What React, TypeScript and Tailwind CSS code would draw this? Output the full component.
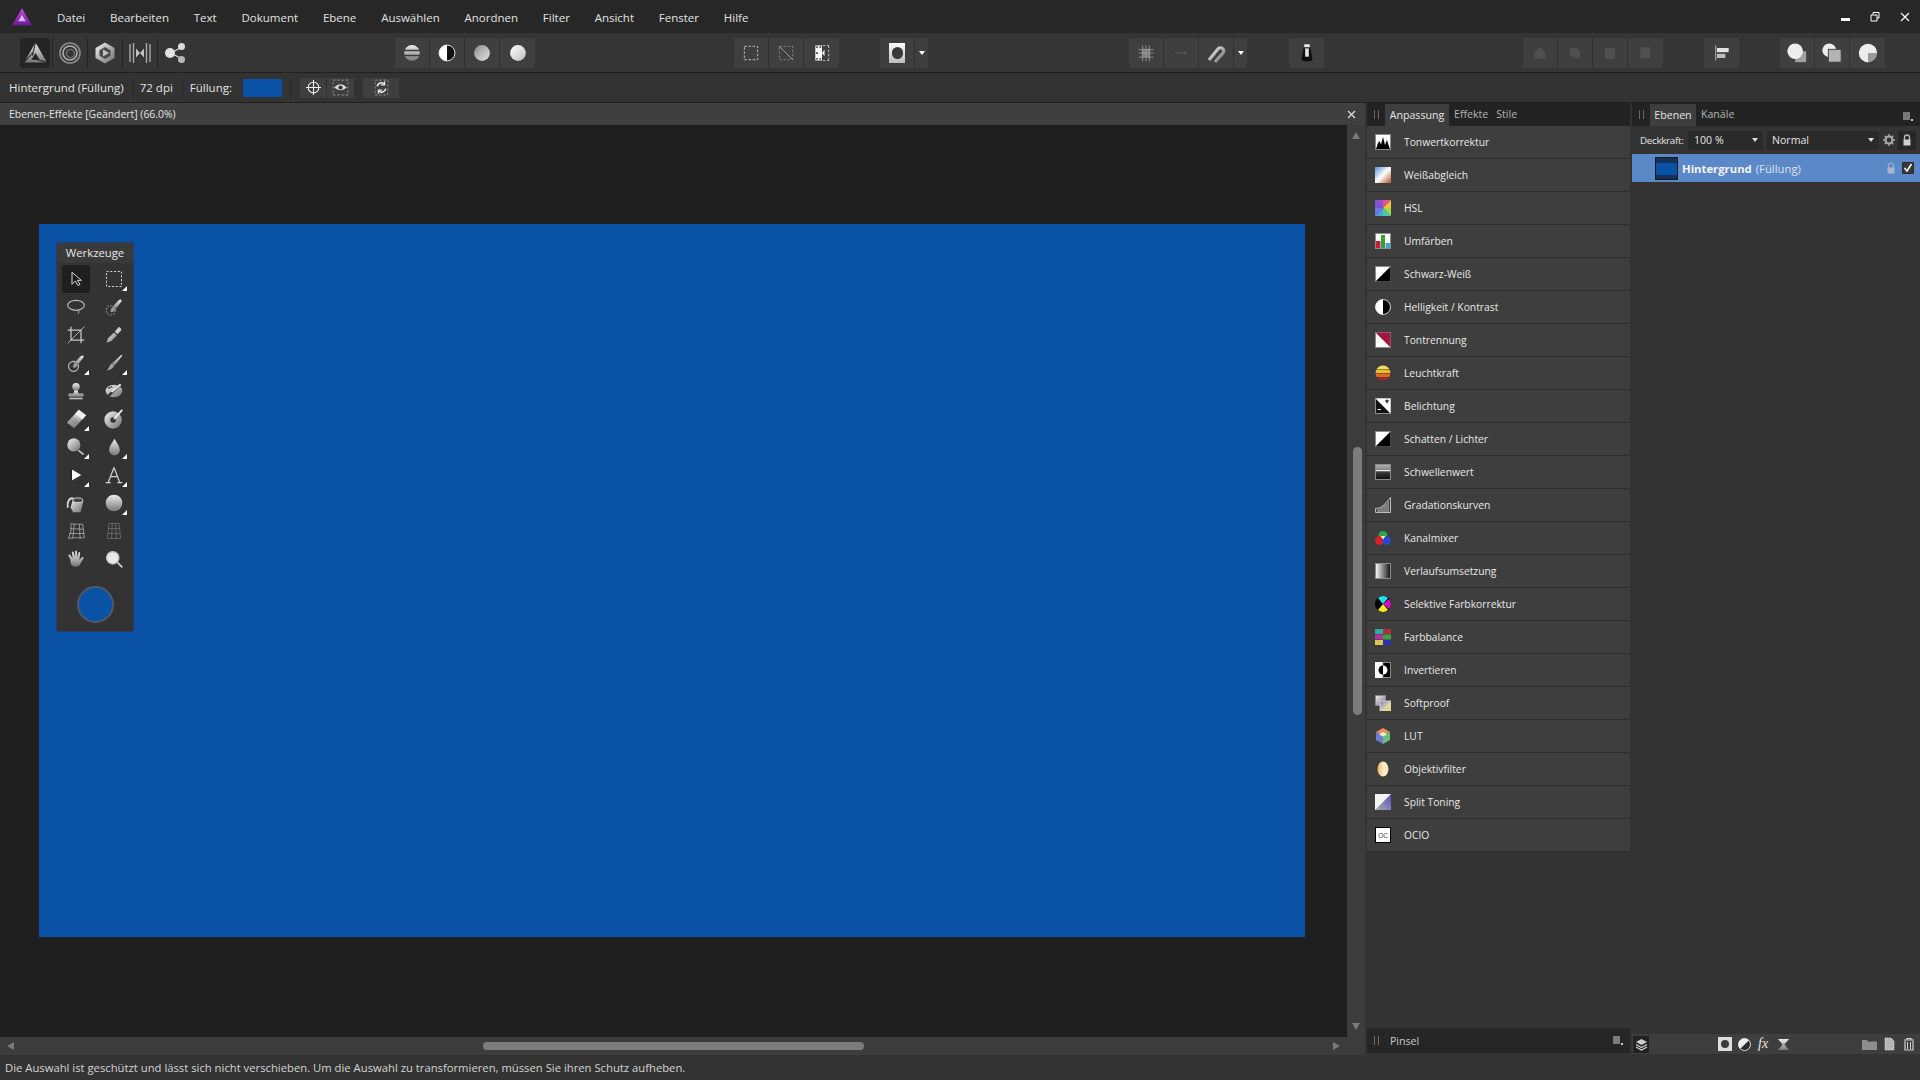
import type { ReactNode } from "react"

const Svg = ({ size = 20, box = 24, children }: { size?: number; box?: number; children: ReactNode }) => (
  <svg width={size} height={size} viewBox={`0 0 ${box} ${box}`} className="block shrink-0">
    {children}
  </svg>
)

function Defs() {
  return (
    <svg className="absolute h-0 w-0">
      <defs>
        <linearGradient id="gv" x1="0" y1="0" x2="0" y2="1">
          <stop offset="0" stopColor="#eeeeee" />
          <stop offset="1" stopColor="#777777" />
        </linearGradient>
        <linearGradient id="gd" x1="0" y1="0" x2="1" y2="1">
          <stop offset="0" stopColor="#f2f2f2" />
          <stop offset="1" stopColor="#6e6e6e" />
        </linearGradient>
        <linearGradient id="gm" x1="0" y1="0" x2="1" y2="1">
          <stop offset="0" stopColor="#8a8a8a" />
          <stop offset="1" stopColor="#e6e6e6" />
        </linearGradient>
        <linearGradient id="gw" x1="0" y1="0" x2="1" y2="1">
          <stop offset="0" stopColor="#ffffff" />
          <stop offset="1" stopColor="#bdbdbd" />
        </linearGradient>
        <linearGradient id="gh" x1="0" y1="0" x2="1" y2="0">
          <stop offset="0" stopColor="#ffffff" />
          <stop offset="1" stopColor="#111111" />
        </linearGradient>
        <linearGradient id="wb" x1="0" y1="0" x2="1" y2="1">
          <stop offset="0" stopColor="#4d93dc" />
          <stop offset="0.5" stopColor="#ffffff" />
          <stop offset="1" stopColor="#b4562a" />
        </linearGradient>
        <linearGradient id="lens" x1="0" y1="0" x2="1" y2="0">
          <stop offset="0" stopColor="#f0b860" />
          <stop offset="0.6" stopColor="#fdf0d0" />
          <stop offset="1" stopColor="#f6dfae" />
        </linearGradient>
        <linearGradient id="split" x1="0" y1="1" x2="1" y2="0">
          <stop offset="0" stopColor="#a9b3a6" />
          <stop offset="1" stopColor="#5a4fc0" />
        </linearGradient>
        <linearGradient id="logo" x1="0" y1="0" x2="0" y2="1">
          <stop offset="0" stopColor="#c24be0" />
          <stop offset="1" stopColor="#6a1a9a" />
        </linearGradient>
        <linearGradient id="thresh" x1="0" y1="0" x2="0" y2="1">
          <stop offset="0" stopColor="#b5b5b5" />
          <stop offset="0.45" stopColor="#777777" />
          <stop offset="0.55" stopColor="#333333" />
          <stop offset="1" stopColor="#111111" />
        </linearGradient>
        <clipPath id="lk">
          <circle cx="8" cy="8" r="7.500" />
        </clipPath>
      </defs>
    </svg>
  )
}

const Caret = () => (
  <div className="flex h-[30px] w-[13px] items-center justify-center bg-[#3f3f3f]">
    <div className="h-0 w-0 border-x-[3px] border-t-[4px] border-x-transparent border-t-white" />
  </div>
)

const Btn = ({ children, last }: { children: ReactNode; last?: boolean }) => (
  <div className={`flex h-[30px] w-[35px] items-center justify-center bg-[#3f3f3f] ${last ? "" : "border-r border-[#303030]"}`}>
    {children}
  </div>
)

const Group = ({ ml, items, caret }: { ml: string; items: ReactNode[]; caret?: boolean }) => (
  <div className={`flex ${ml}`}>
    {items.map((it, i) => (
      <Btn key={i} last={i === items.length - 1 && !caret}>
        {it}
      </Btn>
    ))}
    {caret && <Caret />}
  </div>
)

const Grip = () => (
  <div className="flex w-[5px] justify-between">
    <div className="h-[9px] w-px bg-[#6a6a6a]" />
    <div className="h-[9px] w-px bg-[#6a6a6a]" />
  </div>
)

const PanelMenu = () => (
  <Svg size={11} box={11}>
    <path d="M1 2h7M1 4h7M1 6h7M1 8h7" stroke="#cfcfcf" strokeWidth="1.2" />
    <path d="M9 8h2v2H9z" fill="#cfcfcf" />
  </Svg>
)

// persona icons
const personas = [
  <Svg size={25} key="photo">
    <path d="M12 2.500 23 21.500H1ZM12 12.500l-4 6.500h8Z" fill="url(#gv)" fillRule="evenodd" />
    <path d="M12 2.500 9 15M23 21.500 11 18M1 21.500l9-10" stroke="#232323" strokeWidth="1" fill="none" />
  </Svg>,
  <Svg size={24} key="liquify">
    <circle cx="12" cy="12" r="10" fill="none" stroke="#8b8b8b" strokeWidth="1.600" />
    <circle cx="12" cy="12" r="7" fill="none" stroke="#b0b0b0" strokeWidth="1.600" />
    <circle cx="12.500" cy="12.500" r="4" fill="none" stroke="#7c7c7c" strokeWidth="1.200" />
  </Svg>,
  <Svg size={24} key="develop">
    <path d="M12 1.500 21.500 7v10L12 22.500 2.500 17V7Z" fill="url(#gd)" />
    <path d="M12 6 17.500 9.200v5.600L12 18l-5.500-3.200V9.200Z" fill="#4a4a4a" />
    <path d="M10 8.500 16 12l-6 3.500Z" fill="#c4c4c4" />
  </Svg>,
  <Svg size={24} key="tone">
    <path d="M2 3v18M5.500 2v20M18.500 2v20M22 3v18" stroke="#a8a8a8" strokeWidth="1.400" />
    <path d="M8 7.500 12 12l4-4.500v9L12 12l-4 4.500Z" fill="#c4c4c4" />
  </Svg>,
  <Svg size={24} key="export">
    <path d="M7 12 18 6M7 12l11 6" stroke="#dcdcdc" strokeWidth="1.300" />
    <circle cx="6" cy="12" r="5" fill="#e2e2e2" />
    <circle cx="17.500" cy="5.500" r="3.500" fill="#dcdcdc" />
    <circle cx="17.500" cy="18.500" r="3.500" fill="#b8b8b8" />
  </Svg>,
]

const mode = [
  <Svg size={20} key="strip">
    <circle cx="12" cy="12" r="9.500" fill="url(#gv)" />
    <path d="M2 9h20M2 15h20" stroke="#3a3a3a" strokeWidth="1.800" />
  </Svg>,
  <Svg size={20} key="half">
    <circle cx="12" cy="12" r="9.500" fill="#111" stroke="#fff" strokeWidth="1" />
    <path d="M12 2.500a9.500 9.500 0 0 0 0 19Z" fill="#fff" />
  </Svg>,
  <Svg size={20} key="grad">
    <circle cx="12" cy="12" r="9.500" fill="url(#gm)" />
  </Svg>,
  <Svg size={20} key="white">
    <circle cx="12" cy="12" r="9.500" fill="url(#gw)" />
  </Svg>,
]

const marquee = [
  <Svg size={20} key="m1">
    <rect x="4" y="4" width="16" height="16" fill="none" stroke="#d4d4d4" strokeWidth="1" strokeDasharray="3 2" />
  </Svg>,
  <Svg size={20} key="m2">
    <rect x="4" y="4" width="16" height="16" fill="none" stroke="#8c8c8c" strokeWidth="1" strokeDasharray="3 2" />
    <path d="M4 4 20 20" stroke="#aaaaaa" strokeWidth="1" />
  </Svg>,
  <Svg size={20} key="m3">
    <rect x="4" y="3" width="8" height="18" fill="#fff" />
    <path d="M5 5h2M9 5h2M5 19h2M9 19h2M5 12h2" stroke="#111" strokeWidth="1.600" />
    <path d="M12 12 15 8v8Z" fill="#fff" />
    <path d="M13 3h7M20 3v18M13 21h7" stroke="#d4d4d4" strokeWidth="1" strokeDasharray="3 2" fill="none" />
  </Svg>,
]

const maskBtn = (
  <div className="flex h-[20px] w-[16px] items-center justify-center bg-gradient-to-b from-white to-[#bcbcbc]">
    <div className="h-[12px] w-[11px] rounded-full bg-[#3a3a3a]" />
  </div>
)

const snapping = [
  <Svg size={20} key="grid">
    <rect x="7" y="7" width="10" height="10" fill="#7c7c7c" />
    <path d="M8 3v19M12 3v19M16 3v19M3 8h18M3 12h18M3 17h18" stroke="#9c9c9c" strokeWidth="1" />
  </Svg>,
  <Svg size={20} key="arrow">
    <path d="M5 12h14M15 10l3 2-3 2" stroke="#5c5c5c" strokeWidth="1.200" fill="none" />
  </Svg>,
  <Svg size={24} key="magnet">
    <path d="M5 19 14 8a3.200 3.200 0 0 1 5 4l-8 9" fill="none" stroke="url(#gd)" strokeWidth="3.200" />
  </Svg>,
]

const lockBtn = (
  <Svg size={22} key="bucket">
    <path d="M8 7h8l2 12-2 2H8l-2-2Z" fill="#0f0f0f" />
    <rect x="9" y="2.500" width="6" height="3" fill="#eeeeee" />
    <rect x="10" y="7" width="4" height="9" fill="#e2e2e2" />
  </Svg>
)

const disabled = [
  <Svg size={20} key="d1">
    <path d="M12 5 19 12v7H5v-7Z" fill="#4f4f4f" />
  </Svg>,
  <Svg size={20} key="d2">
    <path d="M6 6h9v3h3v9H9v-3H6Z" fill="#4f4f4f" />
  </Svg>,
  <Svg size={20} key="d3">
    <rect x="6" y="6" width="12" height="13" fill="#4f4f4f" />
  </Svg>,
  <Svg size={20} key="d4">
    <rect x="5" y="5" width="12" height="13" fill="#505050" />
  </Svg>,
]

const alignBtn = (
  <Svg size={20} key="align">
    <path d="M4.500 3v18" stroke="#cfcfcf" strokeWidth="1" />
    <rect x="6" y="6" width="14" height="5" fill="#e4e4e4" />
    <rect x="6" y="13" width="10" height="5" fill="#bcbcbc" />
  </Svg>
)

const booleans = [
  <Svg size={22} key="b1">
    <rect x="10" y="10" width="12" height="12" fill="#a0a0a0" />
    <circle cx="10" cy="10" r="8.500" fill="#ededed" />
  </Svg>,
  <Svg size={22} key="b2">
    <circle cx="9" cy="9" r="7.500" fill="#ededed" />
    <rect x="8" y="8" width="14" height="14" fill="#b4b4b4" stroke="#3f3f3f" strokeWidth="1" />
  </Svg>,
  <Svg size={22} key="b3">
    <circle cx="12" cy="12" r="10" fill="#ededed" />
    <path d="M12 12h10v10H12Z" fill="#3f3f3f" />
    <path d="M12 12h10a10 10 0 0 1-10 10Z" fill="#9a9a9a" />
  </Svg>,
]

// tool icons
const Flag = () => (
  <div className="absolute bottom-[2px] right-[1px] h-[5px] w-[5px] bg-white [clip-path:polygon(100%_0,100%_100%,0_100%)]" />
)

const brushShape = "M20 3c1.500 0 1.500 2 .5 3l-7 9-3.500-3 7-7.500c1-1 2-1.500 3-1.500Z"

const tools: { icon: ReactNode; flag?: boolean; sel?: boolean }[] = [
  {
    sel: true,
    icon: (
      <Svg size={16}>
        <path d="M6 2v18l5-5 4 7 3-2-4-6h6Z" fill="#1c1c1c" stroke="#d8d8d8" strokeWidth="1.500" strokeLinejoin="round" />
      </Svg>
    ),
  },
  {
    flag: true,
    icon: (
      <Svg size={20}>
        <rect x="3" y="3" width="18" height="18" fill="none" stroke="#cfcfcf" strokeWidth="1.200" strokeDasharray="2.500 2" />
      </Svg>
    ),
  },
  {
    icon: (
      <Svg size={20}>
        <ellipse cx="12" cy="10" rx="10" ry="6" fill="none" stroke="#bdbdbd" strokeWidth="1.400" />
        <path d="M14 16c2 1 2 3 0 4" fill="none" stroke="#bdbdbd" strokeWidth="1.200" />
      </Svg>
    ),
  },
  {
    icon: (
      <Svg size={20}>
        <circle cx="8" cy="16" r="5.500" fill="none" stroke="#aaa" strokeWidth="1.200" strokeDasharray="2 1.500" />
        <path d={brushShape} fill="url(#gv)" />
        <path d="M10 12l3.500 3c-1.500 3-4 3.500-6 3 1-2 1-4.500 2.500-6Z" fill="#9a9a9a" />
      </Svg>
    ),
  },
  {
    icon: (
      <Svg size={20}>
        <path d="M6 2v16h16M2 6h16v16" fill="none" stroke="#c8c8c8" strokeWidth="1.500" />
        <path d="M2 22 22 2" stroke="#c8c8c8" strokeWidth="1" />
      </Svg>
    ),
  },
  {
    icon: (
      <Svg size={20}>
        <path d="M3 21l2-5 7-7 3.500 3.500-7 7Z" fill="url(#gd)" />
        <path d="M13 8l4-5c1.500-1.500 5 2 3.500 3.500L16 11Z" fill="#cfcfcf" />
      </Svg>
    ),
  },
  {
    flag: true,
    icon: (
      <Svg size={20}>
        <circle cx="9" cy="16" r="6" fill="none" stroke="#c0c0c0" strokeWidth="1.300" />
        <path d={brushShape} fill="url(#gv)" />
        <path d="M10 11.500l4 3.500c-1.500 2.500-4 3-6 2.500 1-2 1-4.500 2-6Z" fill="#9a9a9a" />
      </Svg>
    ),
  },
  {
    flag: true,
    icon: (
      <Svg size={20}>
        <path d="M21 2c1 0 1 1 .5 2L12 16l-3-3L20 3Z" fill="url(#gv)" />
        <path d="M9 12.500l3 3.500c-2 3-5 5-9 5 3-2 3-6 6-8.500Z" fill="#a0a0a0" />
      </Svg>
    ),
  },
  {
    icon: (
      <Svg size={20}>
        <circle cx="12" cy="7" r="4.500" fill="url(#gv)" />
        <path d="M10 11h4l1 4h6v4H3v-4h6Z" fill="url(#gv)" />
        <rect x="4" y="20" width="16" height="2" fill="#bdbdbd" />
      </Svg>
    ),
  },
  {
    icon: (
      <Svg size={20}>
        <ellipse cx="12" cy="12" rx="10" ry="7.500" fill="url(#gd)" />
        <path d="M3 20 21 3" stroke="#333" strokeWidth="3" />
        <path d="M9 13l11-9" stroke="#e5e5e5" strokeWidth="2.500" />
        <path d="M5 9c2-2 4-2 5-2" stroke="#333" strokeWidth="1.500" fill="none" />
      </Svg>
    ),
  },
  {
    flag: true,
    icon: (
      <Svg size={22}>
        <path d="M15 2 23 8 10 22l-8-6Z" fill="url(#gv)" />
        <path d="M15 2 23 8l-4 4.500-8-6Z" fill="#f0f0f0" />
        <path d="M6 12l7 6M8 10l7 6" stroke="#6a6a6a" strokeWidth="1" strokeDasharray="1.500 1" />
      </Svg>
    ),
  },
  {
    icon: (
      <Svg size={22}>
        <circle cx="11" cy="13" r="9.500" fill="url(#gd)" />
        <circle cx="11" cy="13" r="3" fill="#333" />
        <path d="M12 12 21 2" stroke="#eee" strokeWidth="2" />
      </Svg>
    ),
  },
  {
    flag: true,
    icon: (
      <Svg size={21}>
        <circle cx="9" cy="9" r="7.500" fill="url(#gd)" />
        <path d="M14 15l6 5" stroke="#bbb" strokeWidth="2" />
      </Svg>
    ),
  },
  {
    flag: true,
    icon: (
      <Svg size={21}>
        <path d="M12 2c2 4 6 8 6 13a6 6 0 0 1-12 0c0-5 4-9 6-13Z" fill="url(#gv)" />
      </Svg>
    ),
  },
  {
    flag: true,
    icon: (
      <Svg size={14}>
        <path d="M4 2 21 12 4 22Z" fill="#fff" />
        <path d="M4 2v20" stroke="#111" strokeWidth="2" />
      </Svg>
    ),
  },
  {
    flag: true,
    icon: (
      <Svg size={20}>
        <path d="M2 21h6M16 21h6M12 3 5 21M12 3l7 18M8 14h8" fill="none" stroke="#cfcfcf" strokeWidth="1.500" />
      </Svg>
    ),
  },
  {
    icon: (
      <Svg size={22}>
        <path d="M9 7l11 3-3 12H9l-3-5Z" fill="url(#gd)" />
        <ellipse cx="14" cy="9" rx="5.500" ry="2.500" fill="#444" stroke="#ddd" strokeWidth="1" />
        <path d="M9 7C5 6 2 10 3 17" fill="none" stroke="#dcdcdc" strokeWidth="2" />
      </Svg>
    ),
  },
  {
    flag: true,
    icon: (
      <Svg size={20}>
        <circle cx="12" cy="12" r="10" fill="url(#gv)" />
      </Svg>
    ),
  },
  {
    icon: (
      <Svg size={20}>
        <path d="M6 3c4 2 9 0 14 1l2 16c-5 1-10-1-19 1l3-9Z M5 9c5 1 10 0 16 1M4 15c5 0 12 0 18 0M10 3 8 21M16 4l1 17" fill="none" stroke="#a8a8a8" strokeWidth="1" />
      </Svg>
    ),
  },
  {
    icon: (
      <Svg size={20}>
        <path d="M6 3h12l2 18H4ZM5 9h14M4.500 15h15M10 3 9 21M14 3l1 18" fill="none" stroke="#6c6c6c" strokeWidth="1" />
      </Svg>
    ),
  },
  {
    icon: (
      <Svg size={20}>
        <path d="M5 12 3 8c-.5-1 1-2 2-1l3 4-1-7c0-1.500 2-1.500 2.200 0L11 10V3c0-1.500 2-1.500 2 0l1 7 1-5.500c.3-1.500 2.200-1 2 .5l-1 8 3-3c1-1 2.500 0 2 1l-4 7c-1 2-2 3-4 3h-3c-2 0-3-1-4-3Z" fill="url(#gv)" />
      </Svg>
    ),
  },
  {
    icon: (
      <Svg size={20}>
        <circle cx="10.500" cy="10.500" r="7.500" fill="#e8e8e8" stroke="#bbb" strokeWidth="1.500" />
        <path d="M16 16l6 6" stroke="#d0d0d0" strokeWidth="2" />
      </Svg>
    ),
  },
]

const Frame = ({ children, bg = "#ffffff" }: { children?: ReactNode; bg?: string }) => (
  <Svg size={16} box={16}>
    <rect x="0.500" y="0.500" width="15" height="15" fill={bg} stroke="#8c8c8c" />
    {children}
  </Svg>
)

const adjustments: [string, ReactNode][] = [
  ["Tonwertkorrektur", <Frame><path d="M1 15 3 9l1.500-2L6 10.500 8 3l2 8 2-5 1.500 5 1.500 4Z" fill="#000" /></Frame>],
  ["Weißabgleich", <Svg size={16} box={16}><rect width="16" height="16" fill="url(#wb)" /></Svg>],
  ["HSL", <Svg size={16} box={16}>
    <path d="M0 0h8v8Z" fill="#9b4fd0" /><path d="M8 0h8L8 8Z" fill="#e2548a" /><path d="M16 0v8H8Z" fill="#f0c040" />
    <path d="M16 8v8L8 8Z" fill="#a0d850" /><path d="M16 16H8V8Z" fill="#50c8a0" /><path d="M8 16H0l8-8Z" fill="#50a0e0" />
    <path d="M0 16V8h8Z" fill="#6a78e0" /><path d="M0 8V0l8 8Z" fill="#7a58d8" />
  </Svg>],
  ["Umfärben", <Frame>
    <rect x="1" y="8" width="4.500" height="7" fill="#c02045" /><rect x="6" y="2" width="4" height="13" fill="#3aa030" /><rect x="10.500" y="10" width="4.500" height="5" fill="#4aa0d8" />
  </Frame>],
  ["Schwarz-Weiß", <Frame><path d="M15.500 .5v15H.5Z" fill="#000" /></Frame>],
  ["Helligkeit / Kontrast", <Svg size={16} box={16}><circle cx="8" cy="8" r="7.500" fill="#000" stroke="#fff" strokeWidth=".8" /><path d="M8 .5a7.500 7.500 0 0 0 0 15Z" fill="#fff" /></Svg>],
  ["Tontrennung", <Frame><path d="M.5 .5h15v15Z" fill="#a01840" /></Frame>],
  ["Leuchtkraft", <Svg size={16} box={16}>
    <g clipPath="url(#lk)">
      <rect y="0" width="16" height="4" fill="#f6e060" /><rect y="4.500" width="16" height="3.500" fill="#eebb30" />
      <rect y="8.500" width="16" height="3.500" fill="#d96a25" /><rect y="12.500" width="16" height="4" fill="#a82820" />
    </g>
  </Svg>],
  ["Belichtung", <Frame bg="#111111"><path d="M.5 .5h15v15Z" fill="#fff" /><path d="M10 3h4M12 1.500v4" stroke="#000" strokeWidth="1" /><path d="M2.500 11.500h3.500" stroke="#fff" strokeWidth="1" /></Frame>],
  ["Schatten / Lichter", <Frame><path d="M15.500 .5v15H.5Z" fill="#000" /></Frame>],
  ["Schwellenwert", <Frame bg="url(#thresh)"><rect x="1" y="6" width="14" height="1" fill="#eeeeee" /></Frame>],
  ["Gradationskurven", <Svg size={16} box={16}><path d="M.5 15.500v-4q6-.5 8-3T15.500 .5v15Z" fill="none" stroke="#bbb" /><path d="M3 15v-3M5 15v-4M7 15V9.500M9 15V8M11 15V6.500M13 15V4" stroke="#bdbdbd" strokeWidth="1" /></Svg>],
  ["Kanalmixer", <Svg size={16} box={16}><circle cx="8" cy="5.500" r="4.500" fill="#2da84a" /><circle cx="4.500" cy="10.500" r="4.500" fill="#d8202a" /><circle cx="11.500" cy="10.500" r="4.500" fill="#2a48d0" /><path d="M8 9.500 5.500 6l5 0Z" fill="#f5e9a8" /></Svg>],
  ["Verlaufsumsetzung", <Frame bg="url(#gh)" />],
  ["Selektive Farbkorrektur", <Svg size={16} box={16}><circle cx="8" cy="8" r="8" fill="#000" /><path d="M3 2a8 8 0 0 1 10 0L8 8Z" fill="#22e0f0" /><path d="M14 3a8 8 0 0 1 0 10L8 8Z" fill="#d010c0" /><path d="M13 14a8 8 0 0 1-10 0L8 8Z" fill="#f6ec20" /></Svg>],
  ["Farbbalance", <Svg size={16} box={16}>
    <rect width="8" height="5" fill="#30a8a8" /><rect x="8" width="8" height="5" fill="#b03040" />
    <rect y="5.500" width="8" height="5" fill="#b030a0" /><rect x="8" y="5.500" width="8" height="5" fill="#40a040" />
    <rect y="11" width="8" height="5" fill="#d8c850" /><rect x="8" y="11" width="8" height="5" fill="#3030b0" />
  </Svg>],
  ["Invertieren", <Svg size={16} box={16}><rect width="16" height="16" fill="#fff" /><rect x="8" y=".5" width="7.500" height="15" fill="#000" stroke="#888" /><circle cx="8" cy="8" r="4.500" fill="#000" /><path d="M8 3.500a4.500 4.500 0 0 1 0 9Z" fill="#fff" /></Svg>],
  ["Softproof", <Svg size={16} box={16}><defs><linearGradient id="sp" x1="0" y1="0" x2="1" y2="1"><stop offset="0" stopColor="#8a6fd0" /><stop offset=".6" stopColor="#d8d8a8" /><stop offset="1" stopColor="#e8d060" /></linearGradient></defs><rect x=".5" y=".5" width="10" height="10" fill="url(#gd)" stroke="#888" /><rect x="5" y="6" width="11" height="10" fill="url(#sp)" stroke="#ddd" strokeWidth=".8" /></Svg>],
  ["LUT", <Svg size={16} box={16}><path d="M8 0 15 4 8 8 1 4Z" fill="#e89060" /><path d="M1 4l7 4v8l-7-4Z" fill="#7078d8" /><path d="M15 4 8 8v8l7-4Z" fill="#68c078" /><path d="M8 4l4 2.500-4 2-4-2Z" fill="#f0f0d0" /></Svg>],
  ["Objektivfilter", <Svg size={16} box={16}><ellipse cx="8" cy="8" rx="5.500" ry="7.500" fill="url(#lens)" /></Svg>],
  ["Split Toning", <Svg size={16} box={16}><rect width="16" height="16" fill="#f4f4f4" /><path d="M16 0v16H0Z" fill="url(#split)" /></Svg>],
  ["OCIO", <Svg size={16} box={16}><rect x=".5" y=".5" width="15" height="15" fill="#fff" stroke="#000" /><text x="8" y="10.500" textAnchor="middle" fontSize="6.500" fill="#444" fontFamily="Liberation Sans, sans-serif">OC</text></Svg>],
]

const menu = ["Datei", "Bearbeiten", "Text", "Dokument", "Ebene", "Auswählen", "Anordnen", "Filter", "Ansicht", "Fenster", "Hilfe"]

export default function App() {
  return (
    <div className="flex h-screen w-[1920px] flex-col overflow-hidden bg-[#333333] font-['Open_Sans',sans-serif] text-[11px] text-[#e4e4e4]">
      <Defs />

      {/* menu bar */}
      <div className="flex h-[33px] shrink-0 items-center bg-[#272727] pl-[12px]">
        <Svg size={20}>
          <path d="M12 1.500 23 20.500a1 1 0 0 1-1 1.500H2a1 1 0 0 1-1-1.500Z" fill="url(#logo)" />
          <path d="M12 9.500 16.500 17h-9Z" fill="#f0d0ff" opacity=".85" />
        </Svg>
        <div className="ml-[25px] mt-[2px] flex gap-[24.8px] text-[11.500px] text-[#e2e2e2]">
          {menu.map((m) => (
            <span key={m}>{m}</span>
          ))}
        </div>
        <div className="ml-auto flex items-center gap-[20px] pr-[10px]">
          <div className="mt-[6px] h-[3px] w-[9px] bg-white" />
          <Svg size={10} box={10}>
            <path d="M3 2.500V.5h6v5.500H7M1 3h6v6H1Z" fill="none" stroke="#fff" strokeWidth="1" />
          </Svg>
          <Svg size={10} box={10}>
            <path d="M1 1l8 8M9 1 1 9" stroke="#fff" strokeWidth="1.100" />
          </Svg>
        </div>
      </div>

      {/* main toolbar */}
      <div className="flex h-[40px] shrink-0 items-center border-b border-[#202020] bg-[#353535] pl-[18px]">
        <div className="flex">
          {personas.map((p, i) => (
            <div key={i} className={`flex h-[30px] w-[35px] items-center justify-center ${i < 4 ? "border-r border-[#242424]" : ""}`}>
              {i === 0 ? <div className="flex h-[30px] w-[30px] items-center justify-center rounded-sm bg-[#242424]">{p}</div> : p}
            </div>
          ))}
        </div>
        <Group ml="ml-[202px]" items={mode} />
        <Group ml="ml-[199px]" items={marquee} />
        <Group ml="ml-[41px]" items={[maskBtn]} caret />
        <Group ml="ml-[201px]" items={snapping} caret />
        <Group ml="ml-[42px]" items={[lockBtn]} />
        <Group ml="ml-[199px]" items={disabled} />
        <Group ml="ml-[41px]" items={[alignBtn]} />
        <Group ml="ml-[41px]" items={booleans} />
      </div>

      {/* context bar */}
      <div className="flex h-[30px] shrink-0 items-center border-b border-[#202020] bg-[#333333] pl-[9px] text-[11.500px]">
        <span>Hintergrund (Füllung)</span>
        <div className="ml-[9px] h-[20px] w-px bg-[#262626]" />
        <span className="ml-[6px]">72 dpi</span>
        <div className="ml-[9px] h-[20px] w-px bg-[#262626]" />
        <span className="ml-[7px]">Füllung:</span>
        <div className="ml-[11px] h-[18px] w-[39px] rounded-[1px] bg-[#0952a6]" />
        <div className="ml-[8px] h-[20px] w-px bg-[#262626]" />
        <div className="ml-[9px] flex h-[20px] bg-[#3f3f3f]">
          <div className="flex w-[27px] items-center justify-center border-r border-[#303030]">
            <Svg size={17} box={16}>
              <circle cx="8" cy="8" r="5" fill="none" stroke="#eee" strokeWidth="1" />
              <path d="M8 1v14M1 8h14" stroke="#eee" strokeWidth="1" />
            </Svg>
          </div>
          <div className="flex w-[27px] items-center justify-center">
            <Svg size={19} box={18}>
              <rect x="2" y="2" width="14" height="14" fill="none" stroke="#8a8a8a" strokeDasharray="2 2" />
              <path d="M3 9q6-6 12 0-6 5-12 0Z" fill="#dcdcdc" />
              <circle cx="9" cy="9" r="2" fill="#333" />
            </Svg>
          </div>
        </div>
        <div className="ml-[9px] flex h-[20px] w-[36px] items-center justify-center bg-[#3f3f3f]">
          <Svg size={19} box={18}>
            <rect x="3" y="2" width="12" height="14" fill="none" stroke="#8a8a8a" strokeDasharray="2 2" />
            <path d="M5 8a4 4 0 0 1 7-2M13 10a4 4 0 0 1-7 2" fill="none" stroke="#f0f0f0" strokeWidth="1.400" />
            <path d="M12 3v3.500H8.500M6 15v-3.500h3.500" fill="none" stroke="#f0f0f0" strokeWidth="1" />
          </Svg>
        </div>
      </div>

      <div className="flex min-h-0 flex-1">
        {/* document */}
        <div className="flex w-[1365px] shrink-0 flex-col">
          <div className="flex h-[22px] shrink-0 items-center justify-between bg-[#3f3f3f] pl-[9px] pr-[9px] text-[10.400px]">
            <span className="pt-[1px]">Ebenen-Effekte [Geändert] (66.0%)</span>
            <Svg size={9} box={9}>
              <path d="M1 1l7 7M8 1 1 8" stroke="#e4e4e4" strokeWidth="1.100" />
            </Svg>
          </div>
          <div className="flex min-h-0 flex-1">
            <div className="relative flex-1 bg-[#1e1e1e] pl-[39px] pt-[99px]">
              <div className="h-[713px] w-[1266px] bg-[#0952a6]" />

              {/* floating tools panel */}
              <div className="absolute left-[56px] top-[117px] w-[78px] rounded-[2px] border border-[#23406a] bg-[#333333] pb-[8px]">
                <div className="flex h-[20px] items-center justify-center bg-[#3a3a3a] text-[11.300px] font-medium text-[#e8e8e8]">Werkzeuge</div>
                <div className="grid grid-cols-[28px_28px] gap-x-[10px] pl-[5px] pt-[2px]">
                  {tools.map((t, i) => (
                    <div key={i} className={`relative flex h-[28px] w-[28px] items-center justify-center rounded-[3px] ${t.sel ? "bg-[#1f1f1f]" : ""}`}>
                      {t.icon}
                      {t.flag && <Flag />}
                    </div>
                  ))}
                </div>
                <div className="mx-auto mt-[13px] h-[37px] w-[37px] rounded-full border-2 border-[#4d5a6c] bg-[#0952a6]" />
              </div>
            </div>
            <div className="flex w-[18px] shrink-0 flex-col items-center justify-between bg-[#3c3c3c] py-[7px]">
              <div className="h-0 w-0 border-x-[4px] border-b-[7px] border-x-transparent border-b-[#7a7a7a]" />
              <div className="relative w-full flex-1">
                <div className="absolute left-[6px] top-[308px] h-[268px] w-[9px] rounded-full bg-[#7c7c7c]" />
              </div>
              <div className="h-0 w-0 border-x-[4px] border-t-[7px] border-x-transparent border-t-[#7a7a7a]" />
            </div>
          </div>
          <div className="flex h-[18px] shrink-0 items-center bg-[#3c3c3c] pl-[7px]">
            <div className="h-0 w-0 border-y-[4px] border-r-[7px] border-y-transparent border-r-[#7a7a7a]" />
            <div className="ml-[469px] h-[8px] w-[381px] rounded-full bg-[#7c7c7c]" />
            <div className="ml-[469px] h-0 w-0 border-y-[4px] border-l-[7px] border-y-transparent border-l-[#7a7a7a]" />
          </div>
        </div>

        {/* adjustment panel */}
        <div className="ml-[2px] flex w-[263px] shrink-0 flex-col pb-[2px]">
          <div className="flex h-[23px] shrink-0 items-end bg-[#232323] pl-[7px] text-[10.600px]">
            <div className="mb-[7px]"><Grip /></div>
            <div className="ml-[6px] flex h-[22px] w-[64px] items-center justify-center bg-[#3e3e3e] pt-[1px]">Anpassung</div>
            <span className="mb-[3px] ml-[5px] text-[#b4b4b4]">Effekte</span>
            <span className="mb-[3px] ml-[8px] text-[#b4b4b4]">Stile</span>
          </div>
          {adjustments.map(([label, icon]) => (
            <div key={label} className="flex h-[33px] shrink-0 items-center border-b border-[#2c2c2c] bg-[#3e3e3e] pl-[8px]">
              {icon}
              <span className="ml-[13px] pt-[1px] text-[10.300px] font-medium text-[#e8e8e8]">{label}</span>
            </div>
          ))}
          <div className="flex-1" />
          <div className="flex h-[25px] shrink-0 items-center justify-between bg-[#262626] pl-[7px] pr-[7px]">
            <div className="flex items-center">
              <Grip />
              <span className="ml-[11px] pt-[2px] text-[10.600px] text-[#c8c8c8]">Pinsel</span>
            </div>
            <PanelMenu />
          </div>
        </div>

        {/* layers panel */}
        <div className="ml-[2px] flex min-w-0 flex-1 flex-col pb-[1px]">
          <div className="flex h-[23px] shrink-0 items-end bg-[#232323] pl-[7px] pr-[7px] text-[10.600px]">
            <div className="mb-[7px]"><Grip /></div>
            <div className="ml-[6px] flex h-[22px] w-[46px] items-center justify-center bg-[#3e3e3e] pt-[1px]">Ebenen</div>
            <span className="mb-[3px] ml-[5px] text-[#b4b4b4]">Kanäle</span>
            <div className="mb-[4px] ml-auto"><PanelMenu /></div>
          </div>
          <div className="flex h-[28px] shrink-0 items-center pl-[8px] text-[10.600px]">
            <span className="w-[48px] pt-[2px] text-[9.800px] tracking-[-0.3px]">Deckkraft:</span>
            <div className="flex h-[19px] w-[75px] items-center justify-between rounded-[2px] bg-[#2a2a2a] pl-[6px] pr-[5px]">
              <span className="pt-[1px]">100 %</span>
              <div className="h-0 w-0 border-x-[3px] border-t-[4px] border-x-transparent border-t-[#dddddd]" />
            </div>
            <div className="ml-[4px] flex h-[19px] w-[112px] items-center justify-between rounded-[2px] bg-[#2a2a2a] pl-[5px] pr-[5px]">
              <span className="pt-[2px]">Normal</span>
              <div className="h-0 w-0 border-x-[3px] border-t-[4px] border-x-transparent border-t-[#dddddd]" />
            </div>
            <div className="ml-[4px]">
              <Svg size={12} box={12}>
                <circle cx="6" cy="6" r="3.500" fill="none" stroke="#a8a8a8" strokeWidth="2.200" />
                <path d="M6 0v2M6 10v2M0 6h2M10 6h2M1.800 1.800l1.400 1.400M8.800 8.800l1.400 1.400M1.800 10.200l1.400-1.400M8.800 3.200l1.400-1.400" stroke="#a8a8a8" strokeWidth="1.500" />
              </Svg>
            </div>
            <div className="ml-[3px] flex h-[19px] w-[18px] items-center justify-center rounded-[2px] bg-[#262626]">
              <Svg size={12} box={12}>
                <path d="M3.500 6V3.500a2.500 2.500 0 0 1 5 0V6" fill="none" stroke="#bbb" strokeWidth="1.300" />
                <rect x="2.500" y="5.500" width="7" height="6" fill="#d0d0d0" />
              </Svg>
            </div>
          </div>
          <div className="flex h-[28px] shrink-0 items-center bg-[#5b88c6] pl-[23px] text-[11.300px]">
            <div className="flex h-[23px] w-[23px] flex-col border border-[#1a1a1a] bg-[#16305a]">
              <div className="mt-[5px] h-[12px] bg-[#0952a6]" />
            </div>
            <span className="ml-[4px] pt-[3px] font-bold text-[#f4f4f4]">Hintergrund</span>
            <span className="ml-[4px] pt-[3px] text-[#dbe4f2]">(Füllung)</span>
            <div className="ml-auto">
              <Svg size={12} box={12}>
                <path d="M3.500 6V3.500a2.500 2.500 0 0 1 5 0V6" fill="none" stroke="#9fb0c8" strokeWidth="1.200" />
                <rect x="2.500" y="5.500" width="7" height="6" fill="#a9b7cc" />
              </Svg>
            </div>
            <div className="ml-[5px] mr-[6px] flex h-[12px] w-[12px] items-center justify-center rounded-[1px] border border-[#2a2a2a] bg-[#3a3a3a]">
              <Svg size={10} box={10}>
                <path d="M1.500 5 4 8l4.500-7" fill="none" stroke="#fff" strokeWidth="1.500" />
              </Svg>
            </div>
          </div>
          <div className="flex-1" />
          <div className="flex h-[20px] shrink-0 items-center bg-[#3e3e3e] pl-px">
            <div className="flex h-[17px] w-[16px] items-center justify-center bg-[#222222]">
              <Svg size={13} box={13}>
                <path d="M6.500 1 12 4 6.500 7 1 4Z" fill="#cfcfcf" />
                <path d="M1 6.500l5.500 3 5.500-3M1 9l5.500 3L12 9" fill="none" stroke="#cfcfcf" strokeWidth="1.200" />
              </Svg>
            </div>
            <div className="ml-[69px] flex h-[14px] w-[14px] items-center justify-center bg-[#dedede]">
              <div className="h-[8px] w-[8px] rounded-full bg-[#3a3a3a]" />
            </div>
            <div className="ml-[6px]">
              <Svg size={13} box={13}>
                <circle cx="6.500" cy="6.500" r="6" fill="#2a2a2a" stroke="#ddd" />
                <path d="M6.500 .5a6 6 0 0 0-4.200 10.300L11 2.300A6 6 0 0 0 6.500.5Z" fill="#eee" />
              </Svg>
            </div>
            <span className="ml-[7px] font-['Liberation_Serif',serif] text-[14px] italic leading-none text-[#e8e8e8]">fx</span>
            <div className="ml-[9px]">
              <Svg size={13} box={13}>
                <path d="M1 1h11L7.500 6.500 12 12H1l4.500-5.500Z" fill="url(#gv)" />
              </Svg>
            </div>
            <div className="ml-[72px]">
              <Svg size={15} box={15}>
                <path d="M0 3h5l1 1.500h9V13H0Z" fill="#8d8d8d" />
              </Svg>
            </div>
            <div className="ml-[5px]">
              <Svg size={14} box={14}>
                <path d="M3 1h6l3 3v9H3Z" fill="#b5b5b5" stroke="#ddd" strokeDasharray="1 1" />
              </Svg>
            </div>
            <div className="ml-[6px]">
              <Svg size={14} box={14}>
                <path d="M2 3h10M5 3V1.500h4V3M3 4v9h8V4" fill="none" stroke="#d0d0d0" strokeWidth="1.200" />
                <path d="M5.500 5v7M8.500 5v7" stroke="#d0d0d0" strokeWidth="1" />
              </Svg>
            </div>
          </div>
        </div>
      </div>

      {/* status bar */}
      <div className="flex h-[25px] shrink-0 items-center bg-[#333333] pl-[5px] pt-[1px] text-[11.280px] text-[#d4d4d4]">
        Die Auswahl ist geschützt und lässt sich nicht verschieben. Um die Auswahl zu transformieren, müssen Sie ihren Schutz aufheben.
      </div>
    </div>
  )
}
